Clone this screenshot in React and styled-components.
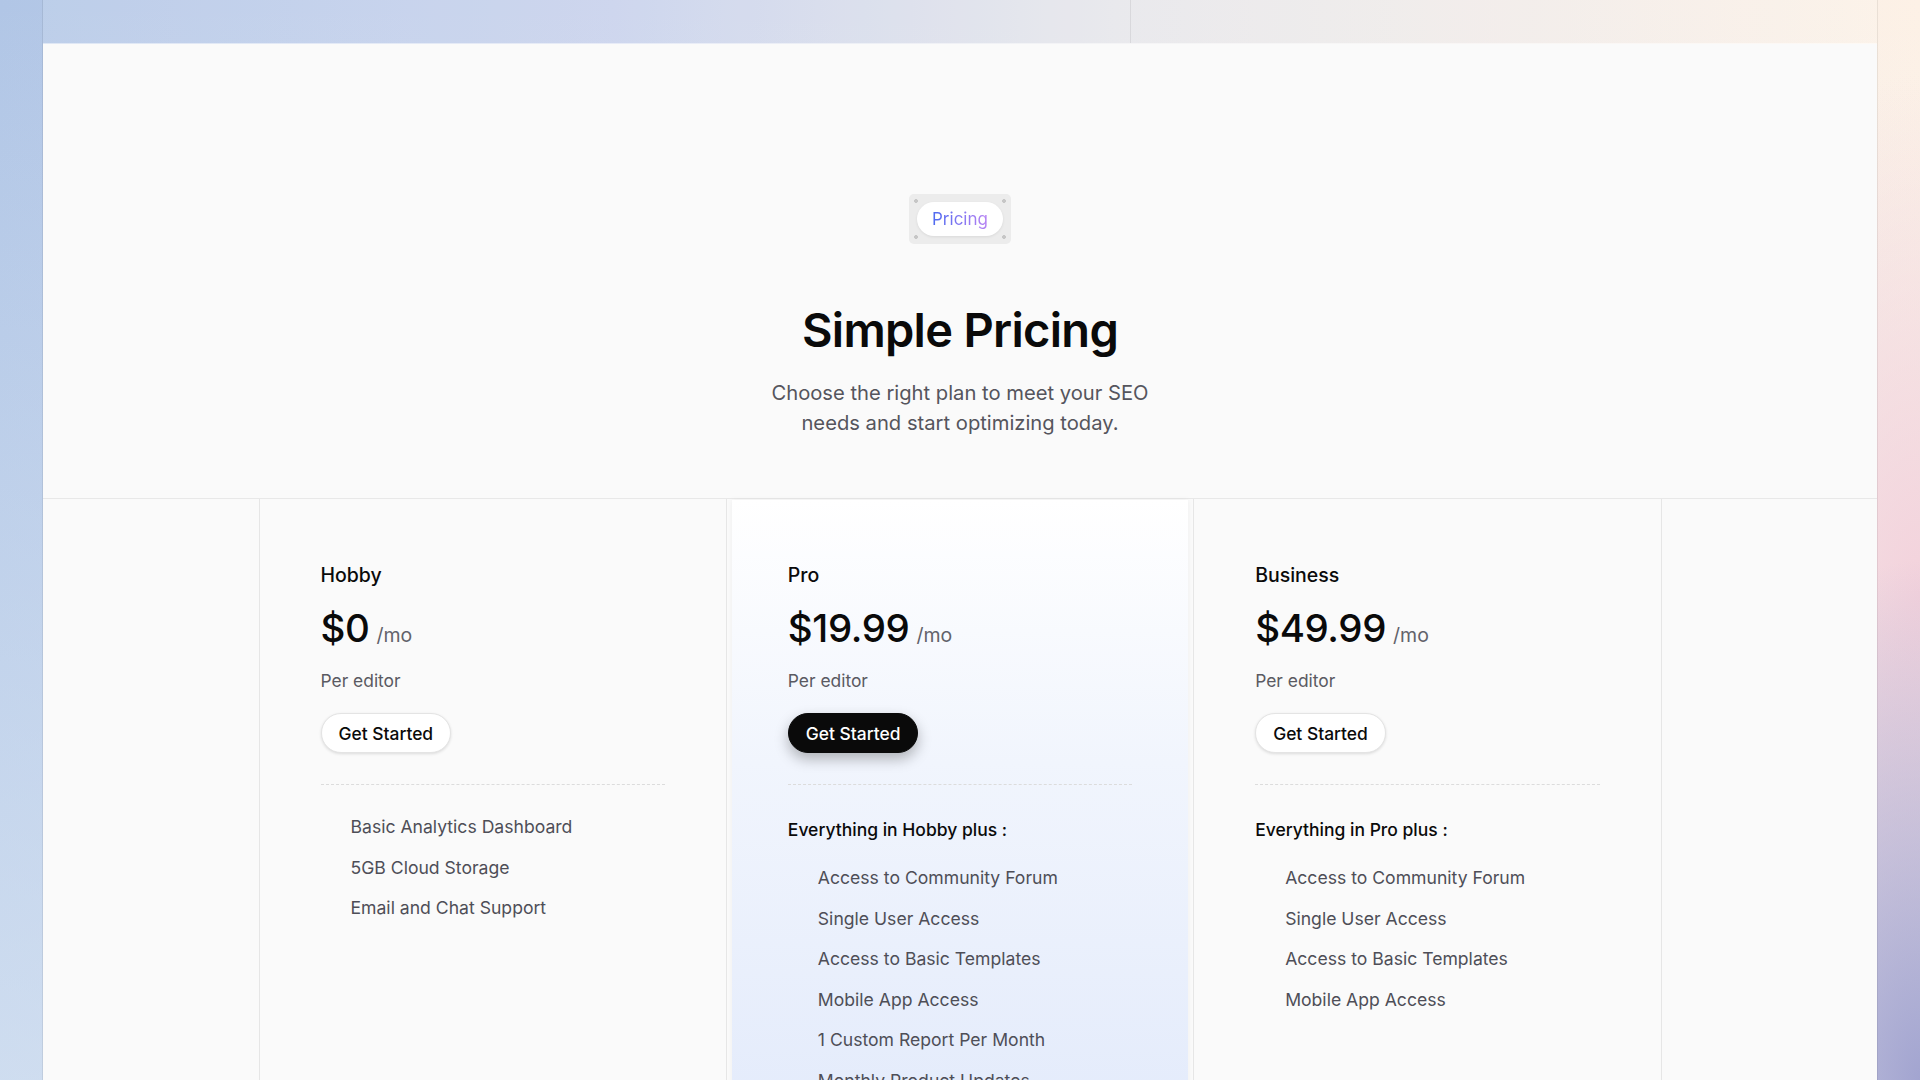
import React from "react";
import styled, { createGlobalStyle } from "styled-components";

const plans = [
  {
    name: "Hobby",
    price: "$0",
    features: [
      "Basic Analytics Dashboard",
      "5GB Cloud Storage",
      "Email and Chat Support",
    ],
  },
  {
    name: "Pro",
    price: "$19.99",
    featured: true,
    heading: "Everything in Hobby plus :",
    features: [
      "Access to Community Forum",
      "Single User Access",
      "Access to Basic Templates",
      "Mobile App Access",
      "1 Custom Report Per Month",
      "Monthly Product Updates",
    ],
  },
  {
    name: "Business",
    price: "$49.99",
    heading: "Everything in Pro plus :",
    features: [
      "Access to Community Forum",
      "Single User Access",
      "Access to Basic Templates",
      "Mobile App Access",
    ],
  },
];

const App = () => {
  return (
    <>
      <GlobalStyle />
      <Page>
        <Frame>
          <TopStrip>
            <StripCell $divider />
            <StripCell />
          </TopStrip>
          <Panel>
            <Hero>
              <BadgeFrame>
                <Badge>
                  <BadgeText>Pricing</BadgeText>
                </Badge>
              </BadgeFrame>
              <Title>Simple Pricing</Title>
              <Subtitle>
                Choose the right plan to meet your SEO needs and start
                optimizing today.
              </Subtitle>
            </Hero>
            <PlansWrap>
              <Plans>
                {plans.map((plan) => (
                  <Column key={plan.name}>
                    <Card $featured={plan.featured}>
                      <PlanName>{plan.name}</PlanName>
                      <PriceRow>
                        <Price>{plan.price}</Price>
                        <Period>/mo</Period>
                      </PriceRow>
                      <Unit>Per editor</Unit>
                      <Button $dark={plan.featured}>Get Started</Button>
                      <Divider />
                      <Features>
                        {plan.heading && (
                          <FeatureHeading>{plan.heading}</FeatureHeading>
                        )}
                        <FeatureList>
                          {plan.features.map((f) => (
                            <Feature key={f}>{f}</Feature>
                          ))}
                        </FeatureList>
                      </Features>
                    </Card>
                  </Column>
                ))}
              </Plans>
            </PlansWrap>
          </Panel>
        </Frame>
      </Page>
    </>
  );
};

const GlobalStyle = createGlobalStyle`
  * {
    box-sizing: border-box;
  }
  body {
    margin: 0;
    font-family: Inter, "Liberation Sans", sans-serif;
    color: #0a0a0a;
    background:
      radial-gradient(ellipse 260px 520px at 100% 100%, #a2a4d0 0%, rgba(162, 164, 208, 0) 100%),
      radial-gradient(ellipse 240px 520px at 100% 55%, #f3d2dc 0%, rgba(243, 210, 220, 0) 100%),
      linear-gradient(180deg, rgba(255, 255, 255, 0) 0%, rgba(226, 236, 246, 0.6) 100%),
      linear-gradient(90deg, #b1c6e6 0%, #c6d0ec 32%, #e6e6ea 58%, #fdf1e6 100%);
    background-attachment: fixed;
  }
`;

const Page = styled.div`
  min-height: 100vh;
  padding: 0 42px;
`;

const Frame = styled.div`
  min-height: 100vh;
  display: flex;
  flex-direction: column;
  border-left: 1px solid rgba(0, 0, 0, 0.07);
  border-right: 1px solid rgba(0, 0, 0, 0.07);
`;

const TopStrip = styled.div`
  height: 44px;
  display: grid;
  grid-template-columns: 1088px 1fr;
  background: rgba(255, 255, 255, 0.14);
  border-bottom: 1px solid rgba(255, 255, 255, 0.5);
`;

const StripCell = styled.div`
  border-right: ${({ $divider }) =>
    $divider ? "1px solid rgba(0, 0, 0, 0.07)" : "none"};
`;

const Panel = styled.main`
  flex: 1;
  background: #fafafa;
`;

const Hero = styled.section`
  display: flex;
  flex-direction: column;
  align-items: center;
  padding: 150px 0 61px;
  border-bottom: 1px solid #e8e8e8;
`;

const BadgeFrame = styled.div`
  padding: 8px;
  border-radius: 5px;
  background:
    radial-gradient(circle at 7px 7px, #c6c6c6 1.6px, transparent 2.2px),
    radial-gradient(circle at calc(100% - 7px) 7px, #c6c6c6 1.6px, transparent 2.2px),
    radial-gradient(circle at 7px calc(100% - 7px), #c6c6c6 1.6px, transparent 2.2px),
    radial-gradient(circle at calc(100% - 7px) calc(100% - 7px), #c6c6c6 1.6px, transparent 2.2px),
    #ececec;
`;

const Badge = styled.div`
  height: 34px;
  padding: 0 15px;
  display: flex;
  align-items: center;
  border-radius: 999px;
  background: #fff;
  box-shadow: 0 1px 3px rgba(0, 0, 0, 0.08);
`;

const BadgeText = styled.span`
  font-size: 17px;
  font-weight: 400;
  background: linear-gradient(90deg, #4d6af0 0%, #b883f3 100%);
  -webkit-background-clip: text;
  background-clip: text;
  color: transparent;
`;

const Title = styled.h1`
  margin: 58px 0 0;
  font-size: 47px;
  line-height: 56px;
  font-weight: 600;
  letter-spacing: -0.015em;
  color: #0a0a0a;
`;

const Subtitle = styled.p`
  margin: 20px 0 0;
  max-width: 400px;
  text-align: center;
  font-size: 20.2px;
  line-height: 29.5px;
  color: #55555d;
`;

const PlansWrap = styled.section`
  display: flex;
  justify-content: center;
`;

const Plans = styled.div`
  width: 1403px;
  display: grid;
  grid-template-columns: repeat(3, 1fr);
  border-right: 1px solid #e6e6e6;
`;

const Column = styled.div`
  border-left: 1px solid #e6e6e6;
  padding: 1px 5px 0;
  display: flex;
`;

const Card = styled.div`
  flex: 1;
  padding: 61px 56px 60px;
  background: ${({ $featured }) =>
    $featured
      ? "linear-gradient(180deg, #ffffff 0%, #f1f5fd 40%, #e2eafb 100%)"
      : "transparent"};
  box-shadow: ${({ $featured }) =>
    $featured ? "0 0 6px rgba(0, 0, 0, 0.05)" : "none"};
`;

const PlanName = styled.h3`
  margin: 0;
  font-size: 19.5px;
  line-height: 28px;
  font-weight: 500;
  color: #0a0a0a;
`;

const PriceRow = styled.div`
  margin-top: 16px;
  display: flex;
  align-items: baseline;
`;

const Price = styled.span`
  font-size: 38.5px;
  line-height: 46px;
  font-weight: 500;
  letter-spacing: -0.01em;
  color: #0a0a0a;
`;

const Period = styled.span`
  margin-left: 7px;
  font-size: 19.5px;
  color: #62626a;
`;

const Unit = styled.div`
  margin-top: 17px;
  font-size: 17.4px;
  line-height: 26px;
  color: #5a5a62;
`;

const Button = styled.button`
  margin-top: 19px;
  height: 40px;
  padding: 0 17px;
  border-radius: 999px;
  font-family: inherit;
  font-size: 17.4px;
  font-weight: 500;
  cursor: pointer;
  border: 1px solid ${({ $dark }) => ($dark ? "#0a0a0a" : "#e4e4e4")};
  background: ${({ $dark }) => ($dark ? "#0a0a0a" : "#ffffff")};
  color: ${({ $dark }) => ($dark ? "#ffffff" : "#0a0a0a")};
  box-shadow: ${({ $dark }) =>
    $dark
      ? "0 6px 14px rgba(0, 0, 0, 0.28)"
      : "0 1px 3px rgba(0, 0, 0, 0.12)"};
`;

const Divider = styled.hr`
  margin: 31px 0 0;
  border: 0;
  border-top: 1px dashed #dcdcdc;
`;

const Features = styled.div`
  padding-top: 29px;
`;

const FeatureHeading = styled.div`
  margin: 3px 0 22px;
  font-size: 17.5px;
  line-height: 26px;
  font-weight: 500;
  color: #0a0a0a;
`;

const FeatureList = styled.ul`
  margin: 0;
  padding: 0;
  list-style: none;
  display: flex;
  flex-direction: column;
  gap: 14.5px;
`;

const Feature = styled.li`
  padding-left: 30px;
  font-size: 17.6px;
  line-height: 26px;
  color: #4e4e57;
`;

export default App;
